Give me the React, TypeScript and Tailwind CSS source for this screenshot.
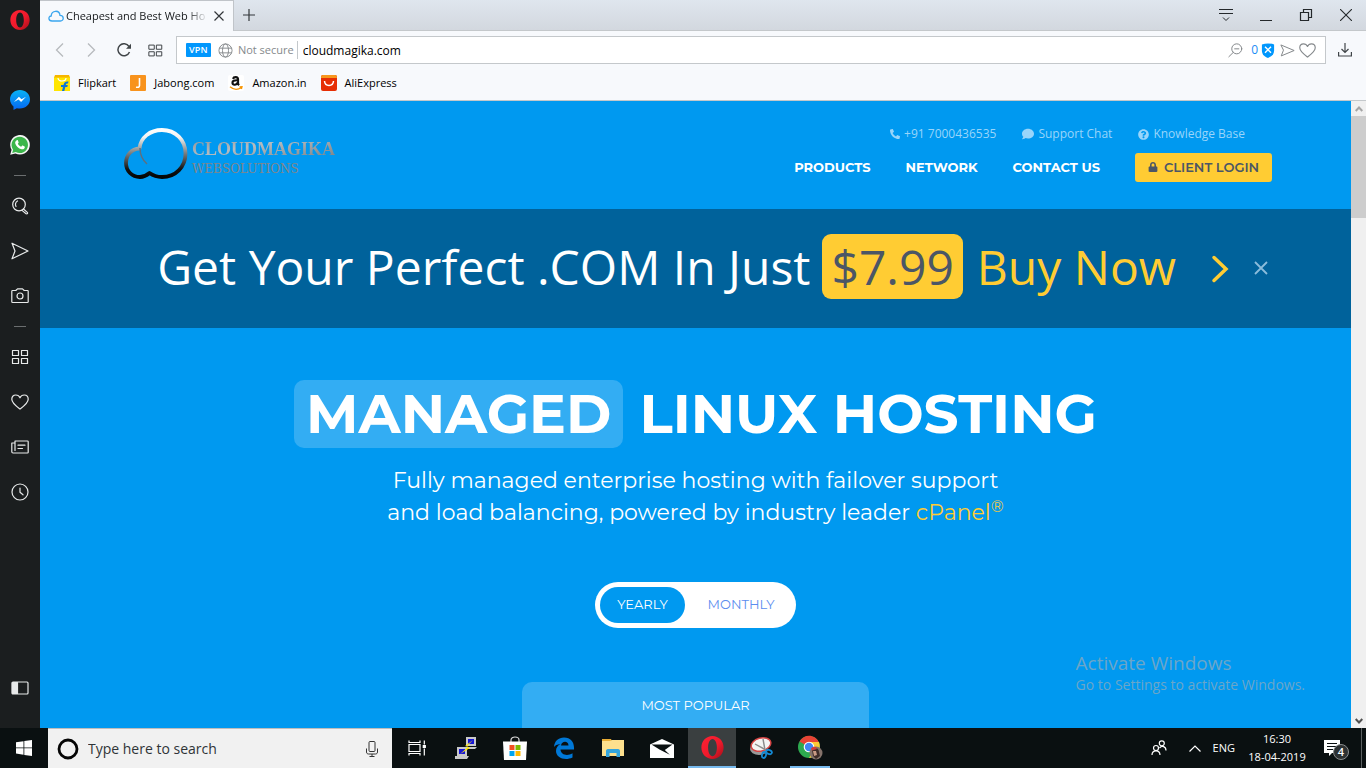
import React from "react";
import { FaPhone, FaComment, FaQuestionCircle, FaLock } from "react-icons/fa";

type IconProps = { className?: string };

function OperaMark({ id, className }: { id: string; className: string }) {
  return (
    <svg viewBox="0 0 24 24" className={className} aria-hidden="true">
      <defs>
        <linearGradient id={id} x1="0" y1="0" x2="1" y2="1">
          <stop offset="0" stopColor="#ff2233" />
          <stop offset="0.55" stopColor="#f01a2c" />
          <stop offset="1" stopColor="#a00f18" />
        </linearGradient>
      </defs>
      <path
        fillRule="evenodd"
        fill={`url(#${id})`}
        d="M12 0C5.4 0 .4 5.2.4 12S5.4 24 12 24s11.6-5.2 11.6-12S18.6 0 12 0Zm0 3c2.700 0 4.600 3.800 4.600 9s-1.900 9-4.600 9-4.600-3.800-4.600-9S9.300 3 12 3Z"
      />
    </svg>
  );
}

function Line({ d, className = "size-[18px]", children }: IconProps & { d?: string; children?: React.ReactNode }) {
  return (
    <svg viewBox="0 0 18 18" className={className} fill="none" stroke="currentColor" strokeWidth="1.2" strokeLinecap="round" strokeLinejoin="round" aria-hidden="true">
      {d && <path d={d} />}
      {children}
    </svg>
  );
}

const heart = "M9 16C5 13 .8 10 .8 6.2.8 3.6 2.6 2 4.8 2 6.6 2 8.2 3 9 4.8 9.8 3 11.4 2 13.2 2c2.2 0 4 1.6 4 4.200C17.200 10 13 13 9 16Z";
const plane = "M1 1.200 17 9 1 16.800 4 9Z";
const grid = "M1.500 2.500h6v5h-6zM10.500 2.500h6v5h-6zM1.500 10.500h6v5h-6zM10.500 10.500h6v5h-6z";

function Messenger() {
  return (
    <svg viewBox="0 0 20 20" className="size-5" aria-hidden="true">
      <defs>
        <linearGradient id="msg" x1="0" y1="0" x2="0" y2="1">
          <stop offset="0" stopColor="#08b3f5" />
          <stop offset="1" stopColor="#0566f5" />
        </linearGradient>
      </defs>
      <path fill="url(#msg)" d="M10 0C4.400 0 0 4.100 0 9.300c0 2.900 1.400 5.400 3.500 7.100V20l3.300-1.800c1 .3 2.100.4 3.200.4 5.600 0 10-4.100 10-9.300S15.600 0 10 0Z" />
      <path fill="#fff" d="m4 12 4.900-5.300 2.600 2.600L16 6.700l-4.900 5.300-2.600-2.600Z" />
    </svg>
  );
}

function WhatsApp() {
  return (
    <svg viewBox="0 0 20 20" className="size-5" aria-hidden="true">
      <path fill="#f4f6f4" d="M.2 19.800 1.600 14.800A9.800 9.800 0 1 1 5.400 18.400Z" />
      <path fill="#3cb64b" d="m2.200 17.900.9-3.200a8.200 8.200 0 1 1 2.700 2.400Z" />
      <path fill="#fff" d="M6.800 5.200c.4-.3.9-.2 1.100.3l.7 1.700c.1.300 0 .5-.2.800l-.6.7c.8 1.500 1.900 2.400 3.400 3.100l.8-1c.2-.3.5-.3.800-.2l1.700.9c.4.2.4.5.3.9-.4 1.400-1.900 2.100-3.200 1.800-3.300-.8-5.700-3.100-6.400-6-.2-1.200.6-2.300 1.600-3Z" />
    </svg>
  );
}

function SideButton({ label, children, className = "" }: { label: string; children: React.ReactNode; className?: string }) {
  return (
    <button aria-label={label} className={`flex h-[45px] w-[38px] shrink-0 items-center justify-center text-[#e8eaea] ${className}`}>
      {children}
    </button>
  );
}

function Sidebar() {
  return (
    <nav aria-label="Sidebar" className="flex w-10 shrink-0 flex-col items-center bg-[#1b1e1f] pr-px">
      <button aria-label="Opera menu" className="flex h-10 items-center justify-center">
        <OperaMark id="op1" className="size-5" />
      </button>
      <div className="h-[37px]" />
      <SideButton label="Messenger"><Messenger /></SideButton>
      <SideButton label="WhatsApp"><WhatsApp /></SideButton>
      <div className="mt-2 mb-[7px] h-px w-3 bg-[#6b6e6f]" />
      <SideButton label="Search">
        <Line><circle cx="8" cy="7.500" r="6.300" /><path d="M5 9.500A4 4 0 0 1 6.500 4M12.500 12l3.800 3.400c.9.800-.3 2.200-1.200 1.300L11 13.400" /></Line>
      </SideButton>
      <SideButton label="My Flow"><Line d={plane} /></SideButton>
      <SideButton label="Snapshot">
        <Line><path d="M1.600 3.500h3.200L6.500 1.800h5l1.700 1.700h3.200c.5 0 .8.300.8.800v10.400c0 .5-.3.800-.8.800H1.600c-.5 0-.8-.3-.8-.8V4.300c0-.5.300-.8.8-.8Z" /><circle cx="9" cy="9" r="3" /></Line>
      </SideButton>
      <div className="mt-2 mb-[7px] h-px w-3 bg-[#6b6e6f]" />
      <SideButton label="Speed Dial"><Line d={grid} /></SideButton>
      <SideButton label="Bookmarks"><Line d={heart} /></SideButton>
      <SideButton label="News">
        <Line><path d="M4 3h12.400c.5 0 .8.300.8.800v10.400c0 .5-.3.800-.8.800H2c-.8 0-1.200-.4-1.200-1.200V5H4M4 3v9.500M7 7.200h7M7 10.500h4.500" /></Line>
      </SideButton>
      <SideButton label="History">
        <Line><circle cx="9" cy="9" r="8" /><path d="M9 5v4.300l3 2.500" /></Line>
      </SideButton>
      <SideButton label="Sidebar setup" className="mt-auto mb-[18px]">
        <Line><rect x="1" y="3" width="16" height="12" rx="1" /><path fill="currentColor" d="M1.500 3.500h5v11h-5z" /></Line>
      </SideButton>
    </nav>
  );
}

function TabStrip() {
  return (
    <div className="flex h-[31px] shrink-0 bg-linear-to-b from-[#dfe6ee] to-[#d2d7de]">
      <div className="flex w-[194px] items-center border-t border-r border-[#c0c4c9] bg-[#f7f9fc] pl-2">
        <svg viewBox="0 0 16 12" className="h-3 w-4 shrink-0" fill="none" stroke="#3ba6ee" strokeWidth="1.300" aria-hidden="true">
          <path d="M4 11C.2 11-.1 6.300 3.200 6 3.500-.2 11.600-.2 12 5.400c4.400.2 4.100 5.600.4 5.600Z" />
        </svg>
        <span className="ml-[2px] w-[142px] overflow-hidden bg-linear-to-r from-[#15181a] from-85% to-transparent bg-clip-text text-[11px] whitespace-nowrap text-transparent">Cheapest and Best Web Ho</span>
        <button aria-label="Close tab" className="ml-[6px] text-[#33373a]">
          <svg viewBox="0 0 10 10" className="size-[10px]" stroke="currentColor" strokeWidth="1.200"><path d="m.5.500 9 9m0-9-9 9" /></svg>
        </button>
      </div>
      <div className="flex flex-1 items-center border-b border-[#c4c8cb]">
        <button aria-label="New tab" className="ml-[9px] text-[#33373a]">
          <svg viewBox="0 0 12 12" className="size-3" stroke="currentColor" strokeWidth="1.200"><path d="M6 0v12M0 6h12" /></svg>
        </button>
        <div className="ml-auto flex items-center gap-[27px] pr-[14px] text-[#24282b]">
          <button aria-label="Tab menu"><svg viewBox="0 0 14 14" className="size-[14px]" fill="none" stroke="currentColor"><path d="M0 1.500h14M0 5.500h14M4 9.500l3 3 3-3" /></svg></button>
          <button aria-label="Minimize"><svg viewBox="0 0 12 14" className="h-[14px] w-3" stroke="currentColor"><path d="M0 12.500h12" /></svg></button>
          <button aria-label="Restore"><svg viewBox="0 0 14 14" className="size-[14px]" fill="none" stroke="currentColor" strokeWidth="1.200"><path d="M1.500 4.500h8v8h-8zM4.500 4.500v-3h8v8h-3" /></svg></button>
          <button aria-label="Close"><svg viewBox="0 0 12 12" className="size-3" stroke="currentColor" strokeWidth="1.100"><path d="m0 0 12 12M12 0 0 12" /></svg></button>
        </div>
      </div>
    </div>
  );
}

function AddressBar() {
  return (
    <div className="flex h-[38px] shrink-0 items-center bg-[#f7f9fc] text-[#404548]">
      <button aria-label="Back" className="ml-[15px] text-[#b7babd]"><svg viewBox="0 0 10 14" className="h-[14px] w-[10px]" fill="none" stroke="currentColor" strokeWidth="1.300"><path d="M8 .500 1.500 7 8 13.500" /></svg></button>
      <button aria-label="Forward" className="ml-[21px] text-[#b7babd]"><svg viewBox="0 0 10 14" className="h-[14px] w-[10px]" fill="none" stroke="currentColor" strokeWidth="1.300"><path d="M2 .500 8.500 7 2 13.500" /></svg></button>
      <button aria-label="Reload" className="ml-[21px]"><svg viewBox="0 0 14 14" className="size-[14px]" fill="none" stroke="currentColor" strokeWidth="1.500"><path d="M12.500 9A6 6 0 1 1 12 3.500" /><path fill="currentColor" stroke="none" d="M14 .800v5H9Z" /></svg></button>
      <button aria-label="Speed Dial" className="ml-[17px]"><Line d={grid} className="size-[15px]" /></button>
      <div className="ml-[13px] flex h-7 min-w-0 flex-1 items-center border border-[#c4c8cb] bg-white">
        <button className="ml-[9px] h-[14px] rounded-[1px] bg-[#0197fd] px-[3px] text-[9px] leading-[14px] font-semibold tracking-wide text-white">VPN</button>
        <svg viewBox="0 0 16 16" className="ml-[7px] size-[15px] shrink-0" fill="none" stroke="#85898c" aria-hidden="true"><circle cx="8" cy="8" r="7" /><ellipse cx="8" cy="8" rx="3.200" ry="7" /><path d="M1.500 5.500h13M1.500 10.500h13" /></svg>
        <span className="ml-[5px] text-[11px] whitespace-nowrap text-[#85898c]">Not secure</span>
        <div className="mr-[5px] ml-[3px] h-[18px] w-px bg-[#c4c8cb]" />
        <input aria-label="Address" defaultValue="cloudmagika.com" className="min-w-0 flex-1 bg-transparent pt-px text-[12px] text-black outline-none" />
        <div className="flex items-center pr-[9px] text-[#85898c]">
          <button aria-label="Zoom out"><Line className="size-[15px]"><circle cx="10.500" cy="7" r="6" /><path d="M6.300 11.300 1 16.500M8 7h5" /></Line></button>
          <span className="ml-2 text-[12px] text-[#1b8df5]">0</span>
          <button aria-label="Ad blocker" className="ml-[3px]"><svg viewBox="0 0 14 16" className="h-[15px] w-[14px]"><path fill="#0197fd" d="M.500 1.500Q7-.500 13.500 1.500V8c0 4-2.500 6.500-6.500 8C3 14.500.500 12 .500 8Z" /><path stroke="#fff" strokeWidth="1.500" d="m3.800 4 6.400 6.400m0-6.400-6.400 6.400" /></svg></button>
          <button aria-label="Send" className="ml-[5px]"><Line d="M1.500 2.500 17 9 1.500 15.500 4 9Z" className="size-[15px]" /></button>
          <button aria-label="Bookmark" className="ml-1"><Line d={heart} className="size-[17px]" /></button>
        </div>
      </div>
      <button aria-label="Downloads" className="mr-[14px] ml-3"><svg viewBox="0 0 14 14" className="size-[14px]" fill="none" stroke="currentColor" strokeWidth="1.200"><path d="M7 0v9.500M3.500 6 7 9.500 10.500 6M.600 9v4h12.800V9" /></svg></button>
    </div>
  );
}

function Bookmark({ label, children }: { label: string; children: React.ReactNode }) {
  return (
    <a href="#" className="flex items-center gap-2 text-[11px] text-black">
      <svg viewBox="0 0 16 16" className="size-4" aria-hidden="true">{children}</svg>
      {label}
    </a>
  );
}

function Bookmarks() {
  return (
    <div className="flex h-8 shrink-0 items-center gap-[14px] border-b border-[#c4c8cb] bg-[#f7f9fc] pb-[3px] pl-[14px]">
      <Bookmark label="Flipkart">
        <path fill="#ffe500" d="M0 2h16v14H0z" /><path fill="#f7b500" d="M1 0h14l1 2.500H0z" /><path fill="none" stroke="#fff" strokeWidth="1.200" d="M4 3c0 4 8 4 8 0" /><path fill="#0b74d8" d="M8 16l1-4H7v-2h2.500C10 7 12 6 14.500 6.500L14 8.500c-1.300-.3-2 .3-2.200 1.500h2l-.5 2h-2l-1 4Z" />
      </Bookmark>
      <Bookmark label="Jabong.com">
        <rect width="16" height="16" rx="1" fill="#f8931d" /><path fill="none" stroke="#fff" strokeWidth="1.600" d="M9.500 3v7.500c0 1.800-1.500 2-3.500 1.700" />
      </Bookmark>
      <Bookmark label="Amazon.in">
        <rect width="16" height="16" rx="2" fill="#fff" /><path fill="none" stroke="#111" strokeWidth="2.200" d="M5 3.800c.8-2.400 5-2.400 5 .5V8c0 1 .3 1.500 1 2.200M10 5.300C6 5 4.300 6 4.500 8c.3 2.600 4.500 2.300 5.500-.8" /><path fill="none" stroke="#f79400" strokeWidth="1.300" d="M2 11.800c3.500 3 8 3 11.500.700M11.500 11.800l2.500-.2-.6 2.400" />
      </Bookmark>
      <Bookmark label="AliExpress">
        <rect width="16" height="16" rx="2" fill="#e62e04" /><path fill="#f7971d" d="M2 0h12a2 2 0 0 1 2 2v1H0V2a2 2 0 0 1 2-2Z" /><path fill="none" stroke="#fff" strokeWidth="1.500" d="M3.500 6c.5 6 8.500 6 9 0" />
      </Bookmark>
    </div>
  );
}

function Logo() {
  return (
    <a href="#" aria-label="CloudMagika Websolutions" className="flex items-center">
      <svg viewBox="0 0 64 52" className="h-[52px] w-16" fill="none" aria-hidden="true">
        <defs>
          <linearGradient id="chrome" gradientUnits="userSpaceOnUse" x1="0" y1="0" x2="0" y2="52">
            <stop offset="0" stopColor="#fff" /><stop offset="0.180" stopColor="#f2f2f2" /><stop offset="0.480" stopColor="#7c8082" /><stop offset="0.800" stopColor="#111" /><stop offset="1" stopColor="#000" />
          </linearGradient>
        </defs>
        <path stroke="url(#chrome)" strokeWidth="3.800" strokeLinejoin="round" d="M15.500 20.500C16.500 9.500 26 2 38 2c13.500 0 23.500 10 23.500 23.500S51.500 49 38 49c-5 0-9-1.500-12.500-4C22 48 19 49 16 49 8 49 2 43 2 35c0-8 5.500-14 13.500-14.500Z" />
        <path stroke="#5d7080" strokeWidth="1.500" d="M16 20c0 7 2.500 12 7 16" />
      </svg>
      <span className="ml-1 flex flex-col pt-1">
        <span className="bg-linear-to-br from-[#8a8d90] via-[#b4bcc2] via-40% to-[#77797b] bg-clip-text font-['Liberation_Serif',serif] text-[18px] leading-[26px] font-bold text-transparent">CLOUDMAGIKA</span>
        <span className="font-['DejaVu_Serif',serif] text-[12px] leading-[14px] text-[#80868b]">WEBSOLUTIONS</span>
      </span>
    </a>
  );
}

function SiteHeader() {
  return (
    <header className="flex h-[108px] shrink-0 items-start justify-between pr-[79px] pl-[84px] text-white">
      <div className="pt-[27px]"><Logo /></div>
      <div className="flex flex-col items-end pt-6">
        <div className="mr-[27px] flex gap-[26px] font-['Open_Sans',sans-serif] text-[12px] leading-[18px] text-[#99d5fa]">
          <a href="#" className="flex items-center gap-1"><FaPhone className="size-[10px] -scale-x-100" />+91 7000436535</a>
          <a href="#" className="flex items-center gap-1"><FaComment className="size-3" />Support Chat</a>
          <a href="#" className="flex items-center gap-1"><FaQuestionCircle className="size-[11px]" />Knowledge Base</a>
        </div>
        <nav className="mt-[10px] flex items-center gap-[35px] font-['Montserrat','Inter',sans-serif] text-[13px] leading-[18px] font-bold">
          <a href="#" className="pb-[2px]">PRODUCTS</a>
          <a href="#" className="pb-[2px]">NETWORK</a>
          <a href="#" className="pb-[2px]">CONTACT US</a>
          <a href="#" className="flex h-[29px] w-[137px] items-center justify-center gap-[6px] rounded-[3px] bg-[#ffcc33] pb-[2px] font-semibold text-[#4b5666]"><FaLock className="size-[10px]" />CLIENT LOGIN</a>
        </nav>
      </div>
    </header>
  );
}

function Promo() {
  return (
    <div className="flex h-[119px] shrink-0 items-center justify-end bg-[#00629b] pr-[83px] pb-1 font-['Open_Sans',sans-serif] text-[48px] leading-[65px] text-white">
      <span className="whitespace-nowrap">Get Your Perfect .COM In Just</span>
      <span className="ml-3 h-[65px] rounded-[9px] bg-[#ffcc33] px-[9px] text-[#4b5666]">$7.99</span>
      <a href="#" className="ml-[14px] flex items-center whitespace-nowrap text-[#ffcc33]">
        Buy Now
        <svg viewBox="0 0 18 28" className="mt-1 ml-[35px] h-7 w-[18px]" fill="none" stroke="currentColor" strokeWidth="3.500" strokeLinecap="round" aria-hidden="true"><path d="m3 2.500 12 11.500L3 25.500" /></svg>
      </a>
      <button aria-label="Dismiss" className="ml-[25px] pt-[2px]"><svg viewBox="0 0 14 14" className="size-[14px]" stroke="#8bbcdb" strokeWidth="1.800"><path d="m1 1 12 12M13 1 1 13" /></svg></button>
    </div>
  );
}

function Hero() {
  return (
    <main className="flex flex-col items-center pt-[52px] font-['Montserrat','Inter',sans-serif] text-white">
      <h1 className="flex h-[68px] items-center gap-4 text-[55px] font-bold whitespace-nowrap">
        <span className="flex h-full items-center rounded-[10px] bg-[#33adf3] px-3">MANAGED</span>
        LINUX HOSTING
      </h1>
      <p className="mt-[17px] text-center text-[22px] leading-8">
        Fully managed enterprise hosting with failover support
        <br />
        and load balancing, powered by industry leader <a href="#" className="text-[#ffcc33]">cPanel<sup className="text-[16px]">®</sup></a>
      </p>
      <div role="group" aria-label="Billing period" className="mt-[53px] flex h-[46px] rounded-full bg-white p-[5px] text-[13px]">
        <button aria-pressed="true" className="w-[85px] rounded-full bg-[#0099f0]">YEARLY</button>
        <button aria-pressed="false" className="w-[106px] pl-[6px] text-[#5b8def]">MONTHLY</button>
      </div>
      <section className="mt-[54px] flex h-[120px] w-[347px] justify-center rounded-t-[10px] bg-[#33adf3] pt-[14px] text-[13px] leading-[18px]">MOST POPULAR</section>
    </main>
  );
}

function ScrollBar() {
  return (
    <div className="flex w-[15px] shrink-0 flex-col items-center bg-[#f0f0f0]">
      <button aria-label="Scroll up" className="flex h-[15px] items-center"><svg viewBox="0 0 8 6" className="h-[6px] w-2" fill="none" stroke="#a5a5a5" strokeWidth="2"><path d="m.700 5 3.300-3.500L7.300 5" /></svg></button>
      <div className="h-[102px] w-full bg-[#cdcdcd]" />
      <button aria-label="Scroll down" className="mt-auto flex h-[15px] items-center"><svg viewBox="0 0 8 6" className="h-[6px] w-2" fill="none" stroke="#505050" strokeWidth="2"><path d="m.700 1 3.300 3.500L7.300 1" /></svg></button>
    </div>
  );
}

function TaskButton({ label, children, className = "w-[49px]" }: { label: string; children: React.ReactNode; className?: string }) {
  return <button aria-label={label} className={`flex h-10 shrink-0 items-center justify-center ${className}`}>{children}</button>;
}

function Taskbar() {
  return (
    <footer className="flex h-10 shrink-0 items-center bg-[#0a1011] text-white">
      <TaskButton label="Start" className="w-12"><svg viewBox="0 0 16 16" className="size-4" fill="#fff"><path d="M0 2.300 7.500 1.200v6.300H0zM8.300 1.100 16 0v7.500H8.300zM0 8.300h7.500v6.400L0 13.600zM8.300 8.300H16V16l-7.700-1.100z" /></svg></TaskButton>
      <label className="flex h-10 w-[344px] items-center border-t border-[#bdbdbd] bg-[#f1f1f1] pr-[14px] pl-[9px]">
        <svg viewBox="0 0 22 22" className="size-[22px]" fill="none" stroke="#050505" strokeWidth="2.800" aria-hidden="true"><circle cx="11" cy="11" r="9" /></svg>
        <input aria-label="Search" placeholder="Type here to search" className="ml-[9px] min-w-0 flex-1 bg-transparent text-[14px] outline-none placeholder:text-[#2f3437]" />
        <svg viewBox="0 0 12 16" className="h-4 w-3" fill="none" stroke="#333" aria-hidden="true"><rect x="3" y=".5" width="6" height="10" rx="1" /><path d="M.500 7.500V11c0 1.500 1 2 2 2h7c1 0 2-.5 2-2V7.500M6 13v2.500M3.500 15.500h5" /></svg>
      </label>
      <TaskButton label="Task view"><svg viewBox="0 0 18 16" className="h-4 w-[18px]" fill="none" stroke="#fff" strokeWidth="1.200"><path d="M1 .500v2h11v-2M1 15.500v-2h11v2M1 4.500h11v7H1zM16.300.500v4M16.300 8.500v7" /><path fill="#fff" d="M15.300 5.500h2v2h-2z" /></svg></TaskButton>
      <TaskButton label="PuTTY">
        <svg viewBox="0 0 24 24" className="size-6"><path fill="#c9c9c9" d="M12 1h10v9H12zM11 11h12l-2 2H11zM3 11h10v9H3zM1 20h14l-2 3H1z" /><path fill="#1616d8" d="M14 3h6v5h-6zM5 13h6v5H5z" /><path fill="#ffe800" d="m19 4-8 6 3 1-8 7 10-6-3-2Z" /></svg>
      </TaskButton>
      <TaskButton label="Microsoft Store">
        <svg viewBox="0 0 24 24" className="size-6"><path fill="none" stroke="#ddd" strokeWidth="1.200" d="M8 7V4c0-4 8-4 8 0v3" /><path fill="#fff" d="M0 5.500h24L23 24H1Z" /><path fill="#f25022" d="M6.500 9h5v5h-5z" /><path fill="#7fba00" d="M12.500 9h5v5h-5z" /><path fill="#00a4ef" d="M6.500 15h5v5h-5z" /><path fill="#ffb900" d="M12.500 15h5v5h-5z" /></svg>
      </TaskButton>
      <TaskButton label="Edge">
        <svg viewBox="0 0 22 22" className="size-[22px]"><path fill="#0078d7" d="M1 10C1.500 4 5.500.500 11 .500c7 0 10.500 5 10 12H7.500c.3 5.500 7 7 12 3.800V20.500C12 24 3 21 3 14c0-3 1.500-5.500 4.500-7C4 7.300 2 8.500 1 10Zm7-1.500h7.500c0-5-6.800-5-7.500 0Z" /></svg>
      </TaskButton>
      <TaskButton label="File Explorer">
        <svg viewBox="0 0 22 20" className="h-5 w-[22px]"><path fill="#e9ad35" d="M0 1h9l1 2H0z" /><path fill="#fde08d" d="M0 3h8l2-1h12v16H0z" /><path fill="#34a5dc" d="M4 19v-6c0-1 .5-2 2-2h10c1.500 0 2 1 2 2v6h-3.500v-4h-7v4Z" /></svg>
      </TaskButton>
      <TaskButton label="Mail"><svg viewBox="0 0 24 19" className="h-[19px] w-6"><path fill="#fff" d="M0 5.500 12 0l12 5.500V19H0Z" /><path fill="#0a1011" d="M1.500 5.500h21L14.800 11l5 4.800L9.500 10.500Z" /></svg></TaskButton>
      <TaskButton label="Opera" className="ml-[2px] w-12 border-b-2 border-[#76b9ed] bg-[#3a3f40]"><OperaMark id="op2" className="size-[23px]" /></TaskButton>
      <TaskButton label="Snipping Tool">
        <svg viewBox="0 0 24 24" className="size-6"><ellipse cx="10" cy="13" rx="9" ry="6" fill="#999" /><ellipse cx="12" cy="8.500" rx="10" ry="6.500" fill="#f3f3f3" stroke="#d64545" strokeWidth="1.500" transform="rotate(-15 12 8.500)" /><path stroke="#8a8a8a" strokeWidth="1.400" d="m6 8 11 6M14 3l2 11" /><g fill="none" stroke="#1489d3" strokeWidth="1.800"><ellipse cx="15" cy="19" rx="2" ry="3" transform="rotate(15 15 19)" /><ellipse cx="20" cy="16" rx="3" ry="2" transform="rotate(20 20 16)" /></g></svg>
      </TaskButton>
      <TaskButton label="Chrome" className="relative w-[49px]">
        <svg viewBox="0 0 26 26" className="size-[26px]"><circle cx="12" cy="12" r="11" fill="#2da94f" /><path fill="#e84335" d="M12 12 2.500 6.500C7-1.500 18-1 21.700 7H12Z" /><path fill="#fcc934" d="M12 7h10c2.500 6-1 15.500-10 16l5-8.500Z" /><circle cx="12" cy="12" r="5.300" fill="#fff" /><circle cx="12" cy="12" r="4.200" fill="#4285f4" /><circle cx="19" cy="18" r="6.500" fill="#85736b" /><path fill="#3e2c29" d="M15 15c2-4 7-2 7 2l1 4-4 3-3-3Z" /><path fill="#c99a85" d="M16 16h3l1 4-3 1Z" /><path fill="#d33b3b" d="M14 13.500c2-2.500 5-2 6 .5l-5 1.500Z" /></svg>
        <span className="absolute bottom-0 h-[2px] w-10 bg-[#76b9ed]" />
      </TaskButton>
      <div className="ml-auto flex h-10 items-center">
        <button aria-label="People"><svg viewBox="0 0 16 16" className="size-4" fill="none" stroke="#fff" strokeWidth="1.200"><circle cx="10.800" cy="3.300" r="2.500" /><circle cx="5" cy="8" r="2.500" /><path d="M1 15c0-5.500 8-5.500 8 0M8.500 8c2.500-3 6.500-1.500 6.500 2.500" /></svg></button>
        <button aria-label="Show hidden icons" className="ml-[22px]"><svg viewBox="0 0 12 7" className="h-[7px] w-3" fill="none" stroke="#fff" strokeWidth="1.200"><path d="m.500 6.500 5.500-5.500 5.500 5.500" /></svg></button>
        <button className="ml-3 text-[11px]">ENG</button>
        <button className="ml-3 flex w-[60px] flex-col items-center text-[11px] leading-[18px] whitespace-nowrap"><span>16:30</span><span>18-04-2019</span></button>
        <button aria-label="4 notifications" className="relative ml-[17px] h-6 w-[25px]">
          <svg viewBox="0 0 17 16" className="h-4 w-[17px]" aria-hidden="true"><path fill="#fff" d="M0 0h16v13h-8l-3 3v-3H0Z" /><path stroke="#0a1011" d="M3 3.500h10M3 6.500h10M3 9.500h6" /></svg>
          <span className="absolute right-0 bottom-0 flex size-4 items-center justify-center rounded-full border border-[#8a8d8e] bg-[#2d3132] text-[11px] font-semibold">4</span>
        </button>
        <div className="ml-3 h-10 w-px bg-[#5b6061]" />
        <div className="w-1" />
      </div>
    </footer>
  );
}

export default function App() {
  return (
    <div className="flex h-screen flex-col overflow-hidden font-['Segoe_UI','Open_Sans',sans-serif]">
      <div className="flex min-h-0 flex-1">
        <Sidebar />
        <div className="flex min-w-0 flex-1 flex-col">
          <TabStrip />
          <AddressBar />
          <Bookmarks />
          <div className="flex min-h-0 flex-1">
            <div className="relative min-w-0 flex-1 overflow-hidden bg-[#0099f0]">
              <SiteHeader />
              <Promo />
              <Hero />
              <div className="pointer-events-none absolute right-[46px] bottom-[33px] text-[#6ba6c8]">
                <div className="text-[19px] leading-6">Activate Windows</div>
                <div className="text-[14px] leading-5">Go to Settings to activate Windows.</div>
              </div>
            </div>
            <ScrollBar />
          </div>
        </div>
      </div>
      <Taskbar />
    </div>
  );
}
